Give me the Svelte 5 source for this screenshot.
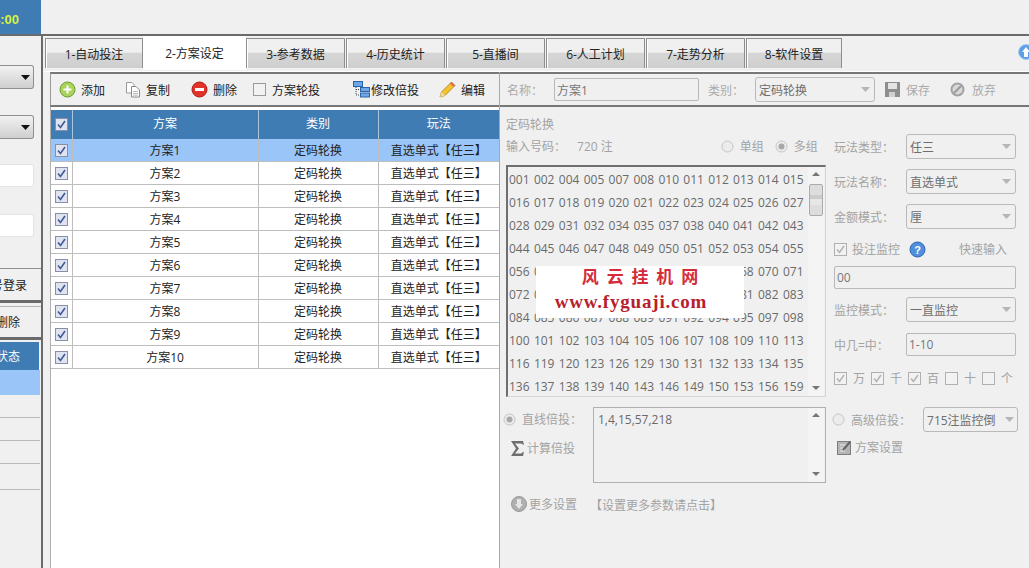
<script lang="ts">
    const tabs = ['1-自动投注', '2-方案设定', '3-参考数据', '4-历史统计', '5-直播间', '6-人工计划', '7-走势分析', '8-软件设置'];
    const plans = Array.from({length: 10}, (_, i) => `方案${i + 1}`);
    const codes = [
        '001 002 004 005 007 008 010 011 012 013 014 015',
        '016 017 018 019 020 021 022 023 024 025 026 027',
        '028 029 031 032 034 035 037 038 040 041 042 043',
        '044 045 046 047 048 049 050 051 052 053 054 055',
        '056 057 058 059 060 061 062 064 065 068 070 071',
        '072 073 074 075 076 077 078 079 080 081 082 083',
        '084 085 086 087 088 089 091 092 094 095 097 098',
        '100 101 102 103 104 105 106 107 108 109 110 113',
        '116 119 120 123 126 129 130 131 132 133 134 135',
        '136 137 138 139 140 143 146 149 150 153 156 159'
    ];
    const digits = [['万', true], ['千', true], ['百', true], ['十', false], ['个', false]];
</script>

{#snippet check(on, muted = false)}
    <svg class="check" width="13" height="13" viewBox="0 0 13 13">
        <rect x="0.5" y="0.5" width="12" height="12" fill={muted || !on ? '#f2f2f2' : '#dfe4f0'} stroke={muted ? '#b0b0b0' : on ? '#8790a6' : '#9a9a9a'}/>
        {#if on}
            <path d="M3 6.5 L5.5 9.5 L10 3" fill="none" stroke={muted ? '#b5b5b5' : '#3f5a96'} stroke-width="1.6"/>
        {/if}
    </svg>
{/snippet}

{#snippet radio(on)}
    <svg class="radio" width="13" height="13" viewBox="0 0 13 13">
        <circle cx="6.5" cy="6.5" r="5.5" fill="#ececec" stroke="#c4c4c4"/>
        {#if on}<circle cx="6.5" cy="6.5" r="3" fill="#a8a8a8"/>{/if}
    </svg>
{/snippet}

{#snippet select(text, cls = '')}
    <div class="select {cls}">
        <span class="select-text">{text}</span>
        <svg width="9" height="5" viewBox="0 0 9 5"><path d="M0 0 H9 L4.5 5 Z" fill="#b5b5b5"/></svg>
    </div>
{/snippet}

<div class="app">
    <header class="top">
        <div class="clock"><b>14:00</b></div>
    </header>

    <div class="content">
        <aside class="side">
            <div class="side-sel s1"><svg width="9" height="5" viewBox="0 0 9 5"><path d="M0 0 H9 L4.5 5 Z" fill="#111"/></svg></div>
            <div class="side-sel s2"><svg width="9" height="5" viewBox="0 0 9 5"><path d="M0 0 H9 L4.5 5 Z" fill="#111"/></svg></div>
            <div class="side-input i1"></div>
            <div class="side-input i2"></div>
            <div class="side-btn b1">账号登录</div>
            <div class="side-btn b2">删除</div>
            <div class="side-head">状态</div>
            <div class="side-row sel"></div>
            <div class="side-row"></div>
            <div class="side-row"></div>
            <div class="side-row"></div>
            <div class="side-row last"></div>
        </aside>

        <main class="main">
            <nav class="tabs">
                {#each tabs as tab, i}
                    <div class="tab" class:active={i === 1}>{tab}</div>
                {/each}
                <svg class="globe" width="16" height="16" viewBox="0 0 16 16">
                    <circle cx="8" cy="8" r="7.5" fill="#5a9fe8" stroke="#a9cbee"/>
                    <path d="M8 3 L12 8 H10 V13 H6 V8 H4 Z" fill="#fff"/>
                </svg>
            </nav>

            <div class="panes">
                <section class="left">
                    <div class="toolbar">
                        <span class="tool add">
                            <svg width="17" height="17" viewBox="0 0 17 17">
                                <circle cx="8.5" cy="8.5" r="7.5" fill="#a9d35a" stroke="#6d9a2e"/>
                                <path d="M8.5 4.5 V12.5 M4.5 8.5 H12.5" stroke="#fff" stroke-width="2"/>
                            </svg>
                            添加
                        </span>
                        <span class="tool copy">
                            <svg width="16" height="17" viewBox="0 0 16 17">
                                <path d="M1.5 1.5 H7 L9 3.5 V12 H1.5 Z" fill="#fff" stroke="#9a9a9a"/>
                                <path d="M6.5 5.5 H11 L14.5 9 V16 H6.5 Z" fill="#fff" stroke="#8a8a8a"/>
                                <path d="M8 10.5 H13 M8 12.5 H13 M8 14.2 H13" stroke="#bbb"/>
                            </svg>
                            复制
                        </span>
                        <span class="tool del">
                            <svg width="17" height="17" viewBox="0 0 17 17">
                                <circle cx="8.5" cy="8.5" r="7.5" fill="#e2322a" stroke="#a81c16"/>
                                <rect x="4" y="7" width="9" height="3" fill="#fff"/>
                            </svg>
                            删除
                        </span>
                        <span class="tool rotate">{@render check(false)}方案轮投</span>
                        <span class="tool multi">
                            <svg width="17" height="17" viewBox="0 0 17 17">
                                <rect x="0.5" y="0.5" width="9" height="5" fill="#6fa6e6" stroke="#2d63ad"/>
                                <rect x="7.5" y="6.5" width="9" height="4" fill="#6fa6e6" stroke="#2d63ad"/>
                                <rect x="7.5" y="12" width="9" height="4" fill="#6fa6e6" stroke="#2d63ad"/>
                                <path d="M3 6 V14 H7 M3 8.5 H7" fill="none" stroke="#444" stroke-dasharray="1 1"/>
                            </svg>
                            修改倍投
                        </span>
                        <span class="tool edit">
                            <svg width="17" height="17" viewBox="0 0 17 17">
                                <path d="M12.5 1 L16 4.5 L6 14.5 L1 16 L2.5 11 Z" fill="#f4c22e" stroke="#a87a12" stroke-width="0.8"/>
                                <path d="M12.5 1 L16 4.5 L14.5 6 L11 2.5 Z" fill="#e2685c"/>
                                <path d="M2.5 11 L1 16 L6 14.5 Z" fill="#efd9b2"/>
                            </svg>
                            编辑
                        </span>
                    </div>
                    <div class="grid-wrap">
                        <table>
                            <colgroup><col class="c0"/><col class="c1"/><col class="c2"/><col class="c3"/></colgroup>
                            <thead>
                                <tr><th>{@render check(true)}</th><th>方案</th><th>类别</th><th>玩法</th></tr>
                            </thead>
                            <tbody>
                                {#each plans as plan, i}
                                    <tr class:sel={i === 0}>
                                        <td>{@render check(true)}</td>
                                        <td>{plan}</td>
                                        <td>定码轮换</td>
                                        <td>直选单式【任三】</td>
                                    </tr>
                                {/each}
                            </tbody>
                        </table>
                    </div>
                </section>

                <section class="right">
                    <div class="toolbar rtool">
                        <span class="lbl l-name">名称：</span>
                        <div class="field name-field">方案1</div>
                        <span class="lbl l-type">类别：</span>
                        {@render select('定码轮换', 'type-sel')}
                        <span class="tool save">
                            <svg width="15" height="15" viewBox="0 0 15 15">
                                <path d="M0 0 H15 V15 H0 Z" fill="#8e8e8e"/>
                                <rect x="3" y="1" width="9" height="6" fill="#e4e4e4"/>
                                <rect x="4" y="10" width="6" height="5" fill="#d0d0d0"/>
                            </svg>
                            保存
                        </span>
                        <span class="tool drop">
                            <svg width="15" height="15" viewBox="0 0 15 15">
                                <circle cx="7.5" cy="7.5" r="6" fill="#d8d8d8" stroke="#a2a2a2" stroke-width="2"/>
                                <path d="M4 11 L11 4" stroke="#9a9a9a" stroke-width="2"/>
                            </svg>
                            放弃
                        </span>
                    </div>

                    <div class="form">
                        <div class="form-main">
                            <div class="codes-col">
                                <div class="muted caption">定码轮换</div>
                                <div class="input-row muted">
                                    <span>输入号码：</span><span class="count">720 注</span>
                                    <span class="radios">{@render radio(false)}<span>单组</span></span>
                                    <span class="radios second">{@render radio(true)}<span>多组</span></span>
                                </div>
                                <div class="codes">
                                    <div class="code-lines">
                                        {#each codes as line}<div>{line}</div>{/each}
                                    </div>
                                    <div class="scroll">
                                        <i class="up"></i>
                                        <div class="thumb"></div>
                                        <i class="down"></i>
                                    </div>
                                    <div class="mark">
                                        <div class="mark-cn">风 云 挂 机 网</div>
                                        <div class="mark-en">www.fyguaji.com</div>
                                    </div>
                                </div>
                            </div>

                            <div class="opts">
                                <div class="opt r1"><span class="muted">玩法类型：</span>{@render select('任三')}</div>
                                <div class="opt r2"><span class="muted">玩法名称：</span>{@render select('直选单式')}</div>
                                <div class="opt r3"><span class="muted">金额模式：</span>{@render select('厘')}</div>
                                <div class="monitor muted">
                                    {@render check(true, true)}
                                    <span>投注监控</span>
                                    <svg class="help" width="17" height="17" viewBox="0 0 17 17">
                                        <circle cx="8.5" cy="8.5" r="7.5" fill="#4f8fdc" stroke="#2c62ad"/>
                                        <text x="8.5" y="12.5" text-anchor="middle" fill="#fff" font-size="11" font-weight="700" font-family="Liberation Sans">?</text>
                                    </svg>
                                    <span class="quick">快速输入</span>
                                </div>
                                <div class="field wide">00</div>
                                <div class="opt r4"><span class="muted">监控模式：</span>{@render select('一直监控')}</div>
                                <div class="opt r5"><span class="muted">中几=中：</span><div class="field short">1-10</div></div>
                                <div class="digits muted">
                                    {#each digits as [d, on]}
                                        <span class="digit">{@render check(on, true)}<span>{d}</span></span>
                                    {/each}
                                </div>
                            </div>
                        </div>

                        <div class="multi-row">
                            <div class="multi-left muted">
                                <div class="mode">{@render radio(true)}<span>直线倍投：</span></div>
                                <div class="sum"><svg width="15" height="17" viewBox="0 0 15 17"><path d="M1 1 H13 L14 5 L11 3.5 H5 L9 8.5 L5 13.5 H11 L14 11.5 L13 16 H1 L6 8.5 Z" fill="#6f6f6f"/></svg><span>计算倍投</span></div>
                            </div>
                            <div class="multi-box">
                                <div class="multi-text">1,4,15,57,218</div>
                                <div class="scroll">
                                    <i class="up"></i>
                                    <i class="down"></i>
                                </div>
                            </div>
                            <div class="multi-right muted">
                                <div class="adv">
                                    {@render radio(false)}<span>高级倍投：</span>
                                    {@render select('715注监控倒', 'adv-sel')}
                                </div>
                                <div class="plan-set">
                                    <svg width="15" height="15" viewBox="0 0 15 15">
                                        <rect x="0.5" y="1.5" width="13" height="13" fill="#b4b4b4" stroke="#7d7d7d"/>
                                        <path d="M3 5 H9 M3 8 H7 M3 11 H8" stroke="#e8e8e8"/>
                                        <path d="M6 10 L13 2" stroke="#666" stroke-width="2"/>
                                    </svg>
                                    <span>方案设置</span>
                                </div>
                            </div>
                        </div>

                        <div class="more muted">
                            <span class="more-btn">
                                <svg width="16" height="16" viewBox="0 0 16 16">
                                    <circle cx="8" cy="8" r="7.5" fill="#b0b0b0" stroke="#9a9a9a"/>
                                    <path d="M6 3 H10 V8 H12 L8 13 L4 8 H6 Z" fill="#e6e6e6"/>
                                </svg>
                                更多设置
                            </span>
                            <span class="more-link">【设置更多参数请点击】</span>
                        </div>
                    </div>
                </section>
            </div>
        </main>
    </div>
</div>

<style>
    :global(body) {
        margin: 0;
        background: #f0f0f0;
        overflow: hidden;
    }

    .app {
        width: 1029px;
        height: 568px;
        overflow: hidden;
        display: flex;
        flex-direction: column;
        font-family: "Open Sans", "Noto Sans CJK SC", sans-serif;
        font-size: 12px;
        color: #222;
        background: #f0f0f0;
    }

    .top {
        height: 34px;
        flex: none;
        border-bottom: 2px solid #6a6a6a;
    }

    .clock {
        width: 41px;
        height: 34px;
        background: #3f7cb4;
        display: flex;
        align-items: center;
        justify-content: flex-end;
        overflow: hidden;
        padding: 4px 22px 0 0;
        box-sizing: border-box;
        color: #d8f23c;
        font-size: 13px;
        font-family: "Liberation Sans", sans-serif;
    }

    .content {
        flex: 1;
        display: flex;
        min-height: 0;
    }

    /* left column, cut off by the window edge */
    .side {
        width: 41px;
        flex: none;
        border-right: 2px solid #6a6a6a;
        display: flex;
        flex-direction: column;
        align-items: stretch;
        overflow: hidden;
    }

    .side-sel {
        height: 24px;
        flex: none;
        margin-right: 7px;
        border: 1px solid #8f8f8f;
        border-left: none;
        border-radius: 0 3px 3px 0;
        box-sizing: border-box;
        background: linear-gradient(#f2f2f2, #cfcfcf);
        display: flex;
        align-items: center;
        justify-content: flex-end;
        padding-right: 3px;
    }

    .s1 { margin-top: 29px; }
    .s2 { margin-top: 26px; }

    .side-input {
        height: 23px;
        flex: none;
        margin-right: 7px;
        background: #fff;
        border: 1px solid #e4e4e4;
        border-left: none;
        border-radius: 0 3px 3px 0;
        box-sizing: border-box;
    }

    .i1 { margin-top: 25px; }
    .i2 { margin-top: 27px; }

    .side-btn {
        height: 35px;
        flex: none;
        box-sizing: border-box;
        display: flex;
        align-items: center;
        justify-content: flex-end;
        padding-right: 14px;
        border-top: 1px solid #8f8f8f;
        border-bottom: 3px solid #6a6a6a;
        background: #f0f0f0;
        white-space: nowrap;
    }

    .b1 { margin-top: 31px; }

    .b2 {
        height: 34px;
        margin-top: 3px;
        border-top: 1px solid #b5b5b5;
        padding-right: 21px;
    }

    .side-head {
        height: 28px;
        margin-right: 2px;
        margin-top: 2px;
        background: #3f7cb4;
        color: #fff;
        display: flex;
        align-items: center;
        justify-content: flex-end;
        padding-right: 19px;
        white-space: nowrap;
        flex: none;
    }

    .side-row {
        height: 23px;
        flex: none;
        box-sizing: border-box;
        margin-right: 1px;
        border-bottom: 1px solid #b8b8b8;
    }

    .side-row.sel {
        height: 25px;
        background: #99c5f9;
        border-bottom: none;
    }

    .side-row.last {
        height: 26px;
    }

    .main {
        flex: 1;
        min-width: 0;
        display: flex;
        flex-direction: column;
    }

    .tabs {
        height: 33px;
        flex: none;
        box-sizing: border-box;
        padding: 2px 0 0 2px;
        display: flex;
        align-items: flex-start;
        position: relative;
    }

    .tab {
        width: 99px;
        margin-right: 1px;
        height: 30px;
        box-sizing: border-box;
        flex: none;
        display: flex;
        align-items: center;
        justify-content: center;
        border: 1px solid #8d8d8d;
        border-bottom: none;
        background: linear-gradient(#f0f0f0 0 45%, #d6d6d6 50%, #cfcfcf);
        white-space: nowrap;
        box-shadow: inset 1px 0 #fff;
    }

    .tab:first-child { width: 98px; margin-right: 0; }
    .tab:nth-child(8) { width: 96px; }

    .tab.active {
        width: 103px;
        height: 34px;
        margin-top: -2px;
        margin-right: 0;
        padding-bottom: 2px;
        background: #fff;
        border-color: #fff;
        box-shadow: none;
    }

    .globe {
        position: absolute;
        right: -5px;
        top: 8px;
    }

    .panes {
        flex: 1;
        min-height: 0;
        display: flex;
        border-top: 1px solid #fff;
        margin-top: 2px;
    }

    .toolbar {
        height: 35px;
        box-sizing: border-box;
        border-top: 2px solid #777;
        border-bottom: 2px solid #777;
        display: flex;
        align-items: center;
        background: #f0f0f0;
        flex: none;
    }

    .left {
        margin-left: 7px;
        width: 449px;
        flex: none;
        display: flex;
        flex-direction: column;
        border-right: 1px solid #a8a8a8;
        box-sizing: content-box;
    }

    .left .toolbar {
        border-left: 1px solid #9a9a9a;
        padding-left: 8px;
    }

    .tool {
        display: inline-flex;
        align-items: center;
        gap: 5px;
        white-space: nowrap;
    }

    .add { width: 66px; }
    .copy { width: 66px; }
    .del { width: 62px; }
    .rotate { width: 100px; gap: 6px; }
    .multi { width: 86px; gap: 1px; }

    .grid-wrap {
        flex: 1;
        background: #fff;
        border-left: 1px solid #b0b0b0;
        padding-top: 3px;
    }

    table {
        border-collapse: collapse;
        table-layout: fixed;
        width: 448px;
    }

    .c0 { width: 21px; }
    .c1 { width: 186px; }
    .c2 { width: 120px; }
    .c3 { width: 121px; }

    th {
        height: 29px;
        padding: 0 0 3px;
        background: #3f7cb4;
        color: #fff;
        font-weight: 400;
        border-right: 1px solid #a9c4dc;
        text-align: center;
        box-sizing: border-box;
    }

    td {
        height: 21px;
        padding: 1px 0 0;
        text-align: center;
        border-right: 1px solid #bdbdbd;
        border-bottom: 1px solid #bdbdbd;
        line-height: 1;
        box-sizing: content-box;
    }

    th:last-child, td:last-child { border-right: none; }

    tr.sel td { background: #99c5f9; }

    .check, .radio {
        display: inline-block;
        vertical-align: middle;
        flex: none;
    }

    .right {
        flex: 1;
        min-width: 0;
        display: flex;
        flex-direction: column;
    }

    .rtool {
        color: #aaa;
        padding-left: 7px;
    }

    .l-name { width: 47px; }
    .l-type { width: 47px; margin-left: 9px; }

    .field {
        height: 23px;
        box-sizing: border-box;
        border: 1px solid #b9b9b9;
        border-radius: 2px;
        background: #f0f0f0;
        color: #777;
        display: flex;
        align-items: center;
        padding-left: 2px;
    }

    .name-field { width: 145px; }

    .select {
        width: 110px;
        height: 25px;
        box-sizing: border-box;
        border: 1px solid #b9b9b9;
        border-radius: 3px;
        background: #f0f0f0;
        display: flex;
        align-items: center;
        justify-content: space-between;
        padding: 0 4px 0 3px;
        color: #6e6e6e;
        flex: none;
    }

    .select-text {
        white-space: nowrap;
        overflow: hidden;
    }

    .type-sel { width: 120px; }
    .save { margin-left: 10px; width: 65px; gap: 6px; color: #aaa; }
    .drop { gap: 7px; color: #aaa; }

    .muted { color: #a3a3a3; }

    .form {
        flex: 1;
        display: flex;
        flex-direction: column;
        padding-left: 6px;
        min-height: 0;
    }

    .form-main {
        display: flex;
        height: 291px;
        flex: none;
    }

    .codes-col {
        width: 320px;
        flex: none;
        display: flex;
        flex-direction: column;
    }

    .caption {
        margin-top: 10px;
        height: 16px;
        line-height: 16px;
    }

    .input-row {
        margin-top: 5px;
        height: 16px;
        display: flex;
        align-items: center;
    }

    .count { margin-left: 11px; }

    .radios {
        display: inline-flex;
        align-items: center;
        gap: 6px;
        margin-left: 108px;
    }

    .radios.second { margin-left: 11px; }

    .codes {
        margin-top: 11px;
        height: 232px;
        box-sizing: border-box;
        border: 1px solid #d4d4d4;
        border-top: 2px solid #6f6f6f;
        border-left: 2px solid #6f6f6f;
        display: flex;
        position: relative;
    }

    .code-lines {
        flex: 1;
        padding: 1px 0 0 1px;
        color: #6a6a6a;
        word-spacing: 1.2px;
        white-space: nowrap;
        overflow: hidden;
    }

    .code-lines div {
        height: 23px;
        line-height: 23px;
    }

    .scroll {
        width: 16px;
        flex: none;
        position: relative;
        background: #f4f4f4;
        margin-right: 1px;
    }

    .scroll i {
        position: absolute;
        left: 4px;
        width: 0;
        height: 0;
        border-left: 4px solid transparent;
        border-right: 4px solid transparent;
    }

    .scroll .up { top: 5px; border-bottom: 4px solid #777; }
    .scroll .down { bottom: 6px; border-top: 4px solid #777; }

    .thumb {
        position: absolute;
        left: 1px;
        top: 17px;
        width: 12px;
        height: 30px;
        border: 1px solid #aaa;
        border-radius: 2px;
        background: repeating-linear-gradient(#ddd 0 10px, #ccc 10px 14px, #e6e6e6 14px 20px);
    }

    .mark {
        position: absolute;
        left: 28px;
        top: 99px;
        width: 208px;
        height: 52px;
        background: #fff;
        text-align: center;
        font-family: "Liberation Serif", serif;
        font-weight: 700;
    }

    .mark-cn {
        color: #d42c3a;
        font-family: "Noto Sans CJK SC", sans-serif;
        font-size: 17px;
        line-height: 20px;
        word-spacing: 4px;
    }

    .mark-en {
        margin-top: 4px;
        padding-right: 18px;
        color: #b6202c;
        font-size: 19px;
        line-height: 24px;
        letter-spacing: 0.8px;
    }

    .opts {
        margin-left: 8px;
        width: 182px;
        flex: none;
        padding-top: 27px;
        display: flex;
        flex-direction: column;
    }

    .opt {
        display: flex;
        align-items: center;
        justify-content: space-between;
    }

    .r2 { margin-top: 10px; }
    .r3 { margin-top: 10px; }
    .r4 { margin-top: 8px; }
    .r5 { margin-top: 11px; }

    .monitor {
        margin-top: 11px;
        display: flex;
        align-items: center;
        gap: 5px;
        height: 18px;
    }

    .help { margin-left: 4px; }
    .quick { margin-left: 28px; white-space: nowrap; }

    .wide {
        width: 182px;
        margin-top: 8px;
    }

    .short { width: 110px; }

    .digits {
        margin-top: 13px;
        display: flex;
        gap: 6px;
        height: 18px;
        align-items: center;
    }

    .digit {
        display: inline-flex;
        align-items: center;
        gap: 6px;
    }

    .multi-row {
        display: flex;
        height: 76px;
        flex: none;
        margin-left: -3px;
        margin-top: 9px;
    }

    .multi-left {
        width: 90px;
        flex: none;
    }

    .mode {
        display: flex;
        align-items: center;
        gap: 6px;
        height: 24px;
    }

    .sum {
        display: flex;
        align-items: center;
        gap: 2px;
        margin-top: 8px;
        margin-left: 7px;
    }

    .multi-box {
        width: 233px;
        flex: none;
        box-sizing: border-box;
        border: 1px solid #b0b0b0;
        display: flex;
    }

    .multi-text {
        flex: 1;
        padding: 3px 0 0 4px;
        color: #6a6a6a;
    }

    .multi-right {
        margin-left: 6px;
        width: 190px;
        flex: none;
    }

    .adv {
        display: flex;
        align-items: center;
        gap: 6px;
    }

    .adv-sel {
        width: 95px;
        margin-left: 6px;
        padding-right: 3px;
    }

    .plan-set {
        display: flex;
        align-items: center;
        gap: 3px;
        margin-top: 6px;
        margin-left: 5px;
    }

    .more {
        display: flex;
        align-items: center;
        margin-top: 10px;
        margin-left: 5px;
    }

    .more-btn {
        display: inline-flex;
        align-items: center;
        gap: 2px;
        width: 79px;
        white-space: nowrap;
    }

    .more-link {
        margin-top: 3px;
        white-space: nowrap;
    }
</style>
